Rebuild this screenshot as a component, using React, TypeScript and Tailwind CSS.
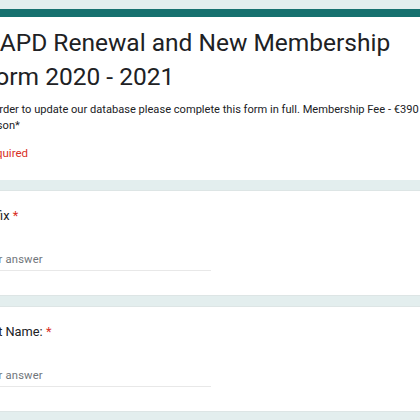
import React from 'react';

interface Question {
  label: string;
}

const questions: Question[] = [{ label: 'Prefix' }, { label: 'First Name:' }, { label: 'Last Name:' }];

const QuestionCard = ({ q }: { q: Question }) => (
  <div className="bg-white border border-[#dde5e5] rounded-lg pl-6 pt-[16px] pb-[24px]">
    <div className="ml-[-2px] text-[12.8px] leading-[18px] text-[#202124]">
      {q.label} <span className="text-[#d93025]">*</span>
    </div>
    <div className="mt-[27px] w-[232px] border-b border-[#e8e8e8] pb-[2px] text-[11.2px] leading-[16px] text-[#70757a] tracking-[0.2px]">
      Your answer
    </div>
  </div>
);

export default function App() {
  return (
    <div
      className="h-[420px] w-[420px] overflow-hidden bg-[#e3eeee]"
      style={{ fontFamily: 'Roboto, "Noto Sans", sans-serif' }}
    >
      <div className="ml-[-46px] w-[500px] pt-[9px] flex flex-col gap-[10px]">
        {/* header card */}
        <div className="bg-white rounded-lg border-t-[8px] border-[#17716f] pl-6 pt-[9px] pb-[19px]">
          <h1 className="ml-[4px] text-[24.5px] leading-[34px] text-[#202124] w-[440px]">
            NAPD Renewal and New Membership Form 2020 - 2021
          </h1>
          <p className="mt-[8px] ml-[3px] text-[11.1px] leading-[16px] text-[#202124] w-[465px]">
            In order to update our database please complete this form in full. Membership Fee - €390 per
            person*
          </p>
          <p className="mt-[11px] ml-[-3px] text-[11.5px] leading-[16px] text-[#d93025]">* Required</p>
        </div>
        {questions.map((q) => (
          <QuestionCard key={q.label} q={q} />
        ))}
      </div>
    </div>
  );
}
